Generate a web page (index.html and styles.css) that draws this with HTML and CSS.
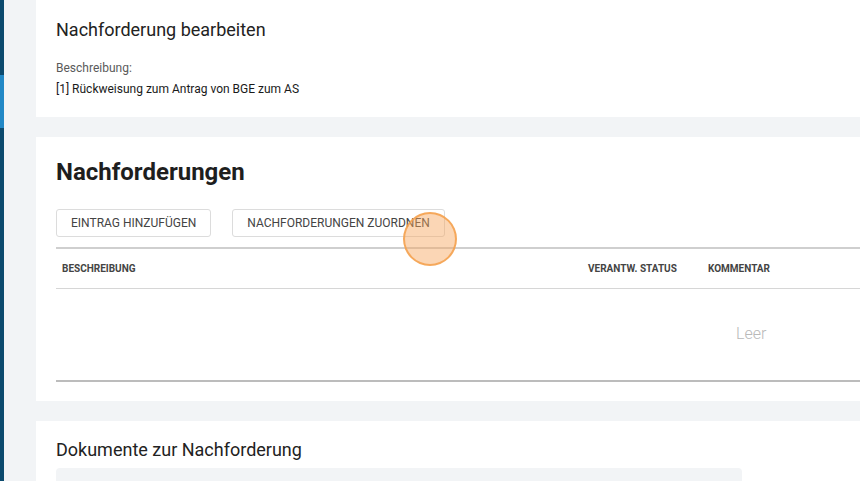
FILE: index.html
```
<!DOCTYPE html>
<html lang="de">
<head>
    <meta charset="UTF-8">
    <meta name="viewport" content="width=device-width, initial-scale=1.0">
    <title>Nachforderung bearbeiten</title>
    <link rel="stylesheet" href="styles.css">
</head>
<body>
    <div class="app">
        <aside class="sidebar">
            <div class="sidebar-active"></div>
        </aside>
        <main class="content">
            <section class="card card-edit">
                <h2 class="card-title">Nachforderung bearbeiten</h2>
                <p class="label">Beschreibung:</p>
                <p class="value">[1] Rückweisung zum Antrag von BGE zum AS</p>
            </section>

            <section class="card card-list">
                <h1 class="list-title">Nachforderungen</h1>
                <div class="btns">
                    <button class="btn">Eintrag hinzufügen</button>
                    <button class="btn">Nachforderungen zuordnen</button>
                </div>
                <div class="table">
                    <div class="table-head">
                        <span>Beschreibung</span>
                        <span>Verantw. Status</span>
                        <span>Kommentar</span>
                    </div>
                    <div class="table-empty">Leer</div>
                </div>
            </section>

            <section class="card card-docs">
                <h2 class="card-title">Dokumente zur Nachforderung</h2>
                <div class="drop-zone"></div>
            </section>
        </main>
    </div>
    <div class="click-marker"></div>
</body>
</html>
```

FILE: styles.css
```
*{
    padding: 0;
    margin: 0;
    box-sizing: border-box;
}
body{
    background: #f2f4f6;
    font-family: Roboto, "Liberation Sans", sans-serif;
    color: #222;
    width: 860px;
    height: 481px;
    overflow: hidden;
}
.app{
    display: flex;
    height: 481px;
    overflow: hidden;
}
.sidebar{
    width: 4px;
    flex-shrink: 0;
    background: #0c4a6e;
    padding-top: 75px;
}
.sidebar-active{
    height: 53px;
    background: #2288c6;
}
.content{
    flex: 1;
    display: flex;
    flex-direction: column;
    gap: 20px;
    padding-left: 32px;
}
.card{
    background: #fff;
    padding-left: 20px;
}
.card-edit{
    padding-top: 18px;
    padding-bottom: 18px;
}
.card-title{
    font-size: 18px;
    font-weight: 400;
    line-height: 24px;
    color: #222;
}
.label{
    margin-top: 16px;
    font-size: 12px;
    line-height: 20px;
    color: #5a5a5a;
}
.value{
    margin-top: 1px;
    font-size: 12px;
    line-height: 20px;
    color: #1a1a1a;
}
.card-list{
    padding-top: 20px;
    padding-bottom: 19px;
}
.list-title{
    font-size: 24px;
    font-weight: 700;
    line-height: 30px;
    color: #1e1e1e;
}
.btns{
    display: flex;
    gap: 21px;
    margin-top: 22px;
}
.btn{
    height: 28px;
    padding: 0 14px;
    white-space: nowrap;
    background: #fff;
    border: 1px solid #dcdcdc;
    border-radius: 3px;
    font-family: Roboto, "Liberation Sans", sans-serif;
    font-size: 12px;
    text-transform: uppercase;
    color: #444;
}
.table{
    margin-top: 10px;
    border-top: 2px solid #cfcfcf;
    border-bottom: 2px solid #bcbcbc;
}
.table-head{
    display: grid;
    grid-template-columns: 526px 120px 1fr;
    height: 40px;
    align-items: center;
    padding-left: 6px;
    border-bottom: 1px solid #d6d6d6;
    font-size: 10px;
    font-weight: 700;
    text-transform: uppercase;
    color: #444;
}
.table-empty{
    height: 91px;
    padding-left: 680px;
    padding-top: 35px;
    font-size: 16px;
    font-weight: 300;
    line-height: 20px;
    color: #b9b9b9;
}
.card-docs{
    flex: 1;
    padding-top: 17px;
}
.drop-zone{
    margin-top: 6px;
    width: 686px;
    height: 13px;
    background: #f2f4f6;
    border-radius: 4px 4px 0 0;
}
.click-marker{
    position: absolute;
    left: 403px;
    top: 212px;
    width: 54px;
    height: 54px;
    border-radius: 50%;
    border: 2px solid rgba(245, 160, 75, 0.85);
    background: rgba(247, 165, 90, 0.45);
}
```
